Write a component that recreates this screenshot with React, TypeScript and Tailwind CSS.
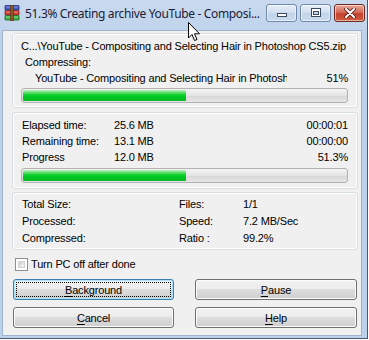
import React from "react"

function RarIcon() {
  return (
    <svg width="16" height="16" viewBox="0 0 16 16">
      <rect x="1" y="0.5" width="14" height="4.5" rx="0.5" fill="#4a5fc4" stroke="#27307a" strokeWidth="0.8" />
      <rect x="1" y="5.5" width="14" height="4.5" rx="0.5" fill="#d9403b" stroke="#7a1f1a" strokeWidth="0.8" />
      <rect x="1" y="10.5" width="14" height="4.5" rx="0.5" fill="#3fb34a" stroke="#1d6322" strokeWidth="0.8" />
      <line x1="2" y1="2" x2="14" y2="2" stroke="#8f9ff0" strokeWidth="0.8" />
      <line x1="2" y1="7" x2="14" y2="7" stroke="#f0a09a" strokeWidth="0.8" />
      <line x1="2" y1="12" x2="14" y2="12" stroke="#9ee6a2" strokeWidth="0.8" />
      <rect x="6.5" y="0" width="3" height="16" fill="#8a5a2b" stroke="#4a2c10" strokeWidth="0.6" />
    </svg>
  )
}

function CaptionButton({ kind }: { kind: "min" | "max" | "close" }) {
  const red = kind === "close"
  return (
    <div
      className={`w-[31px] h-[18px] rounded-[3px] border flex items-center justify-center shadow-[inset_0_0_0_1px_rgba(255,255,255,0.55)] ${
        red
          ? "border-[#6e2a22] bg-[linear-gradient(#e9a99b,#d66a58_45%,#c4412e_55%,#cf5a3c)]"
          : "border-[#7089aa] bg-[linear-gradient(#e7eef8,#d3e0f0_45%,#c2d4ea_55%,#cbdbef)]"
      }`}
    >
      {kind === "min" && (
        <svg width="12" height="10" viewBox="0 0 12 10">
          <rect x="1.5" y="5.5" width="9" height="3" fill="#fff" stroke="#3a4a60" />
        </svg>
      )}
      {kind === "max" && (
        <svg width="12" height="10" viewBox="0 0 12 10">
          <rect x="1.5" y="0.5" width="9" height="8" fill="#fff" stroke="#3a4a60" />
          <rect x="3.5" y="3.5" width="5" height="3" fill="#ccd8e8" stroke="#3a4a60" />
        </svg>
      )}
      {kind === "close" && (
        <svg width="12" height="10" viewBox="0 0 12 10">
          <path d="M2 1 L10 9 M10 1 L2 9" stroke="#4a1a14" strokeWidth="3.6" strokeLinecap="round" />
          <path d="M2 1 L10 9 M10 1 L2 9" stroke="#fff" strokeWidth="2" strokeLinecap="round" />
        </svg>
      )}
    </div>
  )
}

function Progress({ value }: { value: number }) {
  return (
    <div className="h-[15px] w-[327px] rounded-[3px] border border-[#b2b2b2] bg-[linear-gradient(#f4f4f4,#e4e4e4_50%,#d8d8d8_55%,#e6e6e6)] p-px overflow-hidden">
      <div
        className="h-full rounded-l-[1px] bg-[linear-gradient(#bdf3c0,#6fe07a_20%,#0fd12e_45%,#00c820_60%,#08b82a)]"
        style={{ width: `${value}%` }}
      />
    </div>
  )
}

function Btn({ label, focused }: { label: string; focused?: boolean }) {
  return (
    <div
      className={`h-[21px] rounded-[3px] border flex items-center justify-center bg-[linear-gradient(#f2f2f2,#ebebeb_50%,#dddddd_50%,#cfcfcf)] ${
        focused ? "border-[#3c7fb1] shadow-[inset_0_0_0_1px_#aee2fa]" : "border-[#707070] shadow-[inset_0_0_0_1px_#fcfcfc]"
      }`}
    >
      <div
        className={`flex-1 self-stretch m-[2px] flex items-center justify-center ${
          focused ? "border border-dotted border-black" : "border border-transparent"
        }`}
      >
        <span>
          <span className="underline underline-offset-2">{label[0]}</span>
          {label.slice(1)}
        </span>
      </div>
    </div>
  )
}

export default function App() {
  return (
    <div className="w-[369px] h-[340px] bg-white relative overflow-hidden font-['Liberation_Sans',Arial,sans-serif] text-[11px] leading-[16px] tracking-[-0.17px] text-black">
      <div className="w-[368px] h-[339px] flex flex-col border-r border-b border-[#44597a] bg-[linear-gradient(#c9daee,#bcd1ea_40px,#bcd1ea)]">
        <div className="h-[30px] flex items-start">
          <div className="ml-[4px] mt-[5px]">
            <RarIcon />
          </div>
          <div className="ml-[5px] mt-[6px] font-['Noto_Sans',sans-serif] text-[12px] leading-[16px] tracking-[-0.35px] text-[#1b1b3a] whitespace-nowrap">
            51.3% Creating archive YouTube - Composi...
          </div>
          <div className="ml-auto mr-[2px] mt-[4px] flex gap-[3px]">
            <CaptionButton kind="min" />
            <CaptionButton kind="max" />
            <CaptionButton kind="close" />
          </div>
        </div>

        <div className="flex-1 flex pl-[2px] pr-[5px] pb-[2px]">
          <div className="flex-1 bg-[#f0f0f0] border border-[#9fb3cc] pl-[9px] pt-[2px]">
            {/* current file */}
            <div className="w-[346px] h-[75px] rounded-[3px] border border-[#d5dfe5] shadow-[inset_0_0_0_1px_#fff] pl-[8px] pt-[4px]">
              <div className="whitespace-nowrap">C...\YouTube - Compositing and Selecting Hair in Photoshop CS5.zip</div>
              <div className="ml-[4px]">Compressing:</div>
              <div className="flex w-[327px]">
                <span className="ml-[14px] w-[252px] whitespace-nowrap overflow-hidden">
                  YouTube - Compositing and Selecting Hair in Photoshop
                </span>
                <span className="ml-auto">51%</span>
              </div>
              <div className="mt-[2px]">
                <Progress value={50.6} />
              </div>
            </div>

            {/* totals */}
            <div className="mt-[4px] w-[346px] h-[77px] rounded-[3px] border border-[#d5dfe5] shadow-[inset_0_0_0_1px_#fff] pl-[8px] pt-[4px]">
              <div className="w-[327px] grid grid-cols-[92px_1fr_auto] pl-px">
                <span>Elapsed time:</span>
                <span>25.6 MB</span>
                <span className="text-right">00:00:01</span>
                <span>Remaining time:</span>
                <span>13.1 MB</span>
                <span className="text-right">00:00:00</span>
                <span>Progress</span>
                <span>12.0 MB</span>
                <span className="text-right">51.3%</span>
              </div>
              <div className="mt-[3px]">
                <Progress value={50.6} />
              </div>
            </div>

            {/* stats */}
            <div className="mt-[3px] w-[346px] h-[58px] rounded-[3px] border border-[#d5dfe5] shadow-[inset_0_0_0_1px_#fff] pl-[9px] pt-[3px]">
              <div className="grid grid-cols-[157px_64px_1fr] leading-[17px]">
                <span>Total Size:</span>
                <span>Files:</span>
                <span>1/1</span>
                <span>Processed:</span>
                <span>Speed:</span>
                <span>7.2 MB/Sec</span>
                <span>Compressed:</span>
                <span>Ratio :</span>
                <span>99.2%</span>
              </div>
            </div>

            <div className="mt-[8px] ml-[3px] flex items-center h-[13px] leading-[13px]">
              <div className="w-[13px] h-[13px] border border-[#8e8f8f] bg-white p-[2px]">
                <div className="w-full h-full border border-[#d0d0d0] bg-[linear-gradient(135deg,#cbcfd5,#f6f6f6)]" />
              </div>
              <span className="ml-[3px]">Turn PC off after done</span>
            </div>

            <div className="mt-[8px] ml-px w-[344px] grid grid-cols-[161px_162px] justify-between gap-y-[7px]">
              <Btn label="Background" focused />
              <Btn label="Pause" />
              <Btn label="Cancel" />
              <Btn label="Help" />
            </div>
          </div>
        </div>
      </div>

      {/* mouse pointer */}
      <svg className="absolute left-[188px] top-[22px]" width="13" height="20" viewBox="0 0 13 20">
        <path
          d="M0.5 0.5 L0.5 16 L4 12.5 L6.5 18.5 L9 17.5 L6.5 11.8 L11.5 11.8 Z"
          fill="#fff"
          stroke="#000"
          strokeWidth="1"
          strokeLinejoin="miter"
        />
      </svg>
    </div>
  )
}
